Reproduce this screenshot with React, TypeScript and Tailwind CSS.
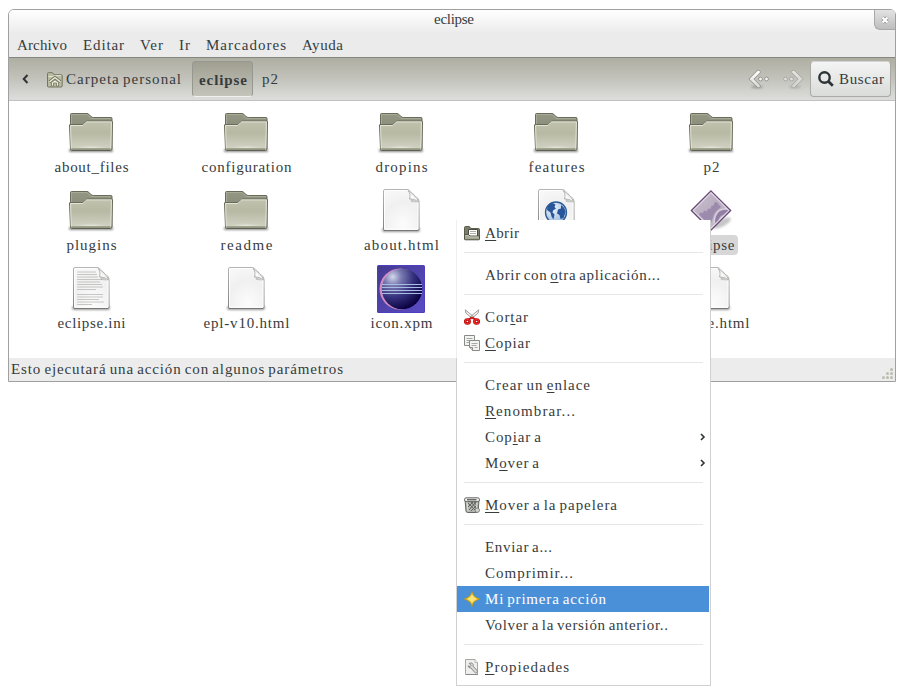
import React from "react";

const SERIF = '"Liberation Serif", "Times New Roman", serif';
const WORD_GAP = -1.5;
let context: CanvasRenderingContext2D | null = null;

/** Letter spacing that makes a label exactly `width` pixels wide. */
function trackingFor(text: string, width: number, size: number, bold: boolean) {
  context = context ?? document.createElement("canvas").getContext("2d");
  if (!context) return 0;
  context.font = `${bold ? "bold " : ""}${size}px ${SERIF}`;
  const natural = context.measureText(text).width + (text.split(" ").length - 1) * WORD_GAP;
  return (width - natural) / Math.max(1, text.length - 1);
}

type LabelProps = { text: string; width: number; size?: number; bold?: boolean; mnemonic?: number; className?: string };

function Label({ text, width, size = 15, bold = false, mnemonic = -1, className = "" }: LabelProps) {
  return (
    <span
      className={`block whitespace-nowrap leading-5 ${bold ? "font-bold" : ""} ${className}`}
      style={{ width, fontSize: size, letterSpacing: trackingFor(text, width, size, bold), wordSpacing: WORD_GAP }}
    >
      {mnemonic < 0 ? (
        text
      ) : (
        <>
          {text.slice(0, mnemonic)}
          <span className="underline decoration-1 underline-offset-2">{text[mnemonic]}</span>
          {text.slice(mnemonic + 1)}
        </>
      )}
    </span>
  );
}

function Gradients() {
  return (
    <svg className="absolute size-0" aria-hidden="true">
      <defs>
        <linearGradient id="folderBack" x1="0" y1="0" x2="0" y2="1">
          <stop offset="0" stopColor="#949783" />
          <stop offset="1" stopColor="#7b7e6c" />
        </linearGradient>
        <linearGradient id="folderFront" x1="0" y1="0" x2="0" y2="1">
          <stop offset="0" stopColor="#c2c3ae" />
          <stop offset=".4" stopColor="#b8b9a3" />
          <stop offset="1" stopColor="#d3d4c5" />
        </linearGradient>
        <radialGradient id="folderGlow" cx=".5" cy="1" r=".5">
          <stop offset="0" stopColor="#f4f4ee" />
          <stop offset="1" stopColor="#d3d4c5" stopOpacity="0" />
        </radialGradient>
        <radialGradient id="paper" cx=".55" cy=".85" r=".9">
          <stop offset="0" stopColor="#fcfcfc" />
          <stop offset=".6" stopColor="#eff0ef" />
          <stop offset="1" stopColor="#f8f8f8" />
        </radialGradient>
        <linearGradient id="paperEdge" x1="0" y1="0" x2="0" y2="1">
          <stop offset="0" stopColor="#b4b5b2" />
          <stop offset="1" stopColor="#80827e" />
        </linearGradient>
        <linearGradient id="curl" x1="0" y1="1" x2=".7" y2=".2">
          <stop offset="0" stopColor="#a9aba7" />
          <stop offset=".5" stopColor="#ffffff" />
          <stop offset="1" stopColor="#d4d5d3" />
        </linearGradient>
        <radialGradient id="ball" cx=".27" cy=".2" r=".85">
          <stop offset="0" stopColor="#d4d8ec" />
          <stop offset=".25" stopColor="#7a7cb2" />
          <stop offset=".6" stopColor="#35317d" />
          <stop offset="1" stopColor="#080040" />
        </radialGradient>
        <linearGradient id="xpmBack" x1="0" y1="0" x2="1" y2="1">
          <stop offset="0" stopColor="#443b91" />
          <stop offset="1" stopColor="#5a4bc4" />
        </linearGradient>
        <linearGradient id="diamond" x1="0" y1="0" x2="1" y2="1">
          <stop offset="0" stopColor="#cac3cf" />
          <stop offset=".5" stopColor="#b9adc0" />
          <stop offset="1" stopColor="#d3cbd7" />
        </linearGradient>
        <radialGradient id="globe" cx=".35" cy=".3" r=".75">
          <stop offset="0" stopColor="#eef4fa" />
          <stop offset="1" stopColor="#9bbbdf" />
        </radialGradient>
        <linearGradient id="star" x1="0" y1="0" x2="0" y2="1">
          <stop offset="0" stopColor="#f9de58" />
          <stop offset="1" stopColor="#f2c31e" />
        </linearGradient>
        <linearGradient id="arrow" x1="0" y1="0" x2="0" y2="1">
          <stop offset="0" stopColor="#ffffff" />
          <stop offset="1" stopColor="#d8dad5" />
        </linearGradient>
        <filter id="soft" x="-30%" y="-100%" width="160%" height="300%">
          <feGaussianBlur stdDeviation="1.1" />
        </filter>
      </defs>
    </svg>
  );
}

function Folder() {
  return (
    <svg width="48" height="48" viewBox="0 0 48 48">
      <rect x="2" y="40" width="44" height="3" rx="1" fill="#000" opacity=".45" filter="url(#soft)" />
      <path d="M3.5 40V5.5q0-1 1-1H20q1 0 1.8.8l2.2 2.2q1 1 2.2 1H44q1 0 1 1V40Z" fill="url(#folderBack)" stroke="#686b5a" />
      <path d="M4.5 16V5.5H20l4 4H44" fill="none" stroke="#a7aa96" />
      <path d="M2.8 15.5h12.5q1 0 1.8-.8l1.6-1.7q.8-1 2-1H44.6q.9 0 .9 1L44.8 40q0 1.5-1.2 1.5H4.8q-1.2 0-1.3-1.5L2.5 16Z" fill="url(#folderFront)" stroke="#686b5a" />
      <path d="M4.2 39.5 3.6 16.5h12.2l3.2-3.2q.4-.4 1-.4H44.4l-.6 26.6" fill="none" stroke="#e7e8dd" strokeWidth=".9" />
      <rect x="4.5" y="32" width="39" height="7.5" fill="url(#folderGlow)" />
      <path d="M4.5 39.5h39" stroke="#a2a58e" strokeWidth="1" />
      <path d="M4.5 41h39" stroke="#56594a" />
    </svg>
  );
}

function Page({ lines = false, globe = false }: { lines?: boolean; globe?: boolean }) {
  return (
    <svg width="48" height="48" viewBox="0 0 48 48">
      <rect x="5" y="41" width="38" height="4" rx="2" fill="#000" opacity=".4" filter="url(#soft)" />
      <path d="M6.5 4Q6.5 2.5 8 2.5H30q2 0 3.5 1.5l7 7q1.5 1.5 1.5 4V42q0 1.5-1.5 1.5H8q-1.5 0-1.5-1.5Z" fill="url(#paper)" stroke="url(#paperEdge)" />
      <path d="M7.5 42V4.5Q7.5 3.5 8.5 3.5H30q9 1 11 11V42Z" fill="none" stroke="#fff" strokeWidth=".9" />
      <path d="M7 43.5h34" stroke="#777974" />
      {lines &&
        [7, 9.5, 12, 14.5, 17, 19.5, 22, 24.5, 29.5, 32, 34.5, 37, 39.5].map((y, i) => (
          <path key={y} d={`M10 ${y}h${[19, 20, 21, 25, 23, 25, 26, 19, 26, 26, 22, 27, 15][i]}`} stroke="#bfc0be" strokeWidth=".9" />
        ))}
      {globe && (
        <>
          <circle cx="24" cy="25.5" r="10.5" fill="url(#globe)" stroke="#2c5a96" strokeWidth="1.3" />
          <path d="M15.5 19q2.5-2.5 5-3l3 1.500-1 2.500 1.500 1.500-3 2-.5 2 2 2-1 5-2-3-1-4-3.500-2.500ZM29 18q4 2.500 4.500 7l-2 6-3 1-1-4-2.500-1.500 1-4 3-1Z" fill="#28569a" />
        </>
      )}
      <path d="M31 3.5q3 3 1.5 8.5 5-.5 9 3-.5-3-4-6.5T31 3.5Z" fill="url(#curl)" stroke="#a6a8a4" strokeWidth=".8" />
      <path d="M33.5 12.5q4 0 7.5 3l-7-.5Z" fill="#999b97" opacity=".5" />
    </svg>
  );
}

function EclipseBall() {
  return (
    <svg width="48" height="48" viewBox="0 0 48 48">
      <rect width="48" height="48" rx="1.5" fill="#4e3fbd" />
      <rect x="1" y="1" width="46" height="46" fill="url(#xpmBack)" />
      <circle cx="23" cy="24" r="20.5" fill="#d28bc0" />
      <circle cx="25" cy="24" r="20.2" fill="url(#ball)" />
      <path d="M5 19.5h40M5 22.5h40M5 25.5h40M5 28.5h40" stroke="#a9bce2" />
    </svg>
  );
}

function Diamond() {
  return (
    <svg width="48" height="48" viewBox="0 0 48 48">
      <ellipse cx="35" cy="36" rx="10" ry="3.5" fill="#000" opacity=".22" filter="url(#soft)" transform="rotate(-28 35 36)" />
      <path d="M24 4 43.5 23.5 24 43 4.5 23.5Z" fill="url(#diamond)" />
      <path d="m13.5 29-1.5-1.5 1.5-2 2.500.5 1-2.500 3 1 1-3 2.500.5 1-3 2-.5 1-3 2-.5 2.500 3 2 2-3 2.500q-4 3-5 8l-3 8Z" fill="#927fa6" opacity=".75" />
      <path d="M42.5 23.5q-9-3-13 4-2.500 4-1 9l3-3q1-5 5-5.500Z" fill="#8975a0" opacity=".85" />
      <path d="M40 22q-12-1-13 14" fill="none" stroke="#dcd4e1" strokeWidth="1.6" opacity=".8" />
      <path d="M24 5.5 42 23.5 24 41.5 6 23.5Z" fill="none" stroke="#eee9f1" strokeWidth="1.2" opacity=".75" />
      <path d="M24 3.8 43.7 23.5 24 43.2 4.3 23.5Z" fill="none" stroke="#654474" strokeWidth="1.2" />
    </svg>
  );
}

function HomeFolder() {
  return (
    <svg width="16" height="16" viewBox="0 0 16 16">
      <path d="M.5 14V1.5q0-.8.8-.8h4.200l1.500 2h7.200q1 0 1 1V14q0 1-1 1H1.500q-1 0-1-1Z" fill="#b9ba9f" stroke="#747660" />
      <path d="M1.5 4.5h4.800l.8-.9h7" fill="none" stroke="#e4e4d3" />
      <path d="m2.5 10 5.500-4.500L13.500 10" fill="none" stroke="#747660" strokeWidth="3" />
      <path d="m2.5 10 5.500-4.500L13.500 10" fill="none" stroke="#f0f0e2" strokeWidth="1.3" />
      <path d="M4.5 14v-3.500L8 7.800l3.500 2.700V14H9.500v-3h-3v3Z" fill="#f0f0e2" stroke="#747660" strokeWidth=".8" />
    </svg>
  );
}

function MenuIcon({ name }: { name: string }) {
  return (
    <svg width="16" height="16" viewBox="0 0 16 16">
      {name === "open" && (
        <>
          <path d="M.5 14V2.5q0-1 1-1h3.800l1.700 2h7.500q1 0 1 1V14Z" fill="#7a7d6c" stroke="#5b5e4f" />
          <path d="M4.500 4.500h9v7h-9z" fill="#fff" stroke="#484b3d" />
          <path d="M6 6.500h6M6 8.500h6" stroke="#b0b1ad" />
          <path d="M.5 9.500h4l1.500 1.500h9.500V14q0 .8-1 .8h-13q-1 0-1-.8Z" fill="#a3a692" stroke="#525546" />
          <path d="M1.500 10.500H4l1.500 1.500h9" fill="none" stroke="#c4c6b5" />
        </>
      )}
      {name === "cut" && (
        <>
          <path d="M1.300.8 1.800 4l6.700 6 1.500-2ZM14.700.8 14.200 4l-6.700 6L6 8Z" fill="#eeeeec" stroke="#888a85" strokeWidth=".8" />
          <path d="M4.500 10.500 8 8.500l3.500 2" fill="none" stroke="#cc1111" strokeWidth="1.6" />
          <ellipse cx="3.400" cy="12.500" rx="2.200" ry="2" fill="none" stroke="#b00000" strokeWidth="2.6" />
          <ellipse cx="12.600" cy="12.500" rx="2.200" ry="2" fill="none" stroke="#b00000" strokeWidth="2.6" />
          <ellipse cx="3.400" cy="12.500" rx="2.300" ry="2.100" fill="none" stroke="#ef2929" strokeWidth="1.2" />
          <ellipse cx="12.600" cy="12.500" rx="2.300" ry="2.100" fill="none" stroke="#ef2929" strokeWidth="1.2" />
        </>
      )}
      {name === "copy" && (
        <>
          <path d="M.5.5h10v10H.5z" fill="#f2f3f2" stroke="#888a85" />
          <path d="M2.500 3.500h6M2.500 5.500h5M2.500 7.500h3" stroke="#a6a8a4" />
          <path d="M5.500 5.500h10v10h-7l-3-3Z" fill="#f2f3f2" stroke="#888a85" />
          <path d="M5.500 12.500h3v3" fill="#d3d5d0" stroke="#888a85" />
          <path d="M7.500 8.500h6M7.500 10.500h5M10.500 12.500h3" stroke="#a6a8a4" />
        </>
      )}
      {name === "trash" && (
        <>
          <path d="M1 2.500 2 14q.2 1.500 1.700 1.500h9q1.300 0 1.500-1.500L15 2.500Z" fill="#b4b6b2" stroke="#656764" />
          <path d="m4 6 7 7M7 5l5 6M10 5l3 4M12 5l-7 8M9 5l-5 5M13 8l-6 6" stroke="#5a5c58" strokeWidth=".9" />
          <path d="M3 5.500 4 14M13 6l-1 8" stroke="#dedfdd" />
          <rect x=".5" y=".8" width="15" height="3.8" rx="1.7" fill="#eeefed" stroke="#656764" />
          <path d="M3 2.700h9.500" stroke="#6a6c69" strokeWidth="1.5" />
          <circle cx="13.300" cy="13.200" r="2.200" fill="#d4d6d1" stroke="#777974" strokeWidth=".9" />
        </>
      )}
      {name === "star" && (
        <>
          <path d="M8 .5q1 4.300 2.600 4.900Q12 6.800 15.600 8q-3.600 1.200-5 2.600Q9 11.200 8 15.500 7 11.200 5.400 10.600 4 9.200.4 8q3.600-1.200 5-2.600Q7 4.800 8 .5Z" fill="url(#star)" stroke="#bf960f" strokeWidth=".9" />
          <path d="M8 3.500 9.600 6.600 12.600 8 9.600 9.400 8 12.500 6.400 9.400 3.400 8l3-1.400Z" fill="#fff3a8" opacity=".6" />
        </>
      )}
      {name === "properties" && (
        <>
          <path d="M1.500.5H11L13.500 3.500v12h-12z" fill="#edeeed" stroke="#a5a7a3" />
          <path d="M11 .5v3h2.500" fill="#fff" stroke="#aaaca7" strokeWidth=".8" />
          <path d="M5.200 4.300q3-1.300 4 1.200l-.1 1.700 4 4.300q.8 1.500-.5 2.300-1 .4-2-.5L7 9q-2.500.2-3-2.200l2 .9 1-1.400Z" fill="#d8dad7" stroke="#80827e" strokeWidth=".9" />
          <path d="M2 15.500h12" stroke="#858782" />
        </>
      )}
    </svg>
  );
}

type FileItem = { text: string; width: number; icon: React.ReactNode; selected?: boolean };

const files: (FileItem | null)[] = [
  { text: "about_files", width: 74, icon: <Folder /> },
  { text: "configuration", width: 90, icon: <Folder /> },
  { text: "dropins", width: 52, icon: <Folder /> },
  { text: "features", width: 56, icon: <Folder /> },
  { text: "p2", width: 16, icon: <Folder /> },
  { text: "plugins", width: 50, icon: <Folder /> },
  { text: "readme", width: 52, icon: <Folder /> },
  { text: "about.html", width: 75, icon: <Page /> },
  { text: "", width: 0, icon: <Page globe /> },
  { text: "eclipse", width: 46, icon: <Diamond />, selected: true },
  { text: "eclipse.ini", width: 68, icon: <Page lines /> },
  { text: "epl-v10.html", width: 86, icon: <Page /> },
  { text: "icon.xpm", width: 62, icon: <EclipseBall /> },
  null,
  { text: "notice.html", width: 76, icon: <Page /> },
];

type Entry = { text: string; width: number; icon?: string; mnemonic?: number; submenu?: boolean; active?: boolean };

const groups: Entry[][] = [
  [{ text: "Abrir", width: 34, icon: "open", mnemonic: 0 }],
  [{ text: "Abrir con otra aplicación...", width: 175, mnemonic: 10 }],
  [
    { text: "Cortar", width: 43, icon: "cut", mnemonic: 3 },
    { text: "Copiar", width: 45, icon: "copy", mnemonic: 0 },
  ],
  [
    { text: "Crear un enlace", width: 105, mnemonic: 9 },
    { text: "Renombrar...", width: 90, mnemonic: 0 },
    { text: "Copiar a", width: 56, mnemonic: 3, submenu: true },
    { text: "Mover a", width: 54, mnemonic: 1, submenu: true },
  ],
  [{ text: "Mover a la papelera", width: 132, icon: "trash", mnemonic: 0 }],
  [
    { text: "Enviar a...", width: 67 },
    { text: "Comprimir...", width: 88 },
    { text: "Mi primera acción", width: 121, icon: "star", active: true },
    { text: "Volver a la versión anterior..", width: 183 },
  ],
  [{ text: "Propiedades", width: 84, icon: "properties", mnemonic: 0 }],
];

function TitleBar() {
  return (
    <div className="flex h-6 items-start">
      <div className="w-[21px]" />
      <div className="flex flex-1 justify-center pl-1">
        <Label text="eclipse" width={40} className="-mt-px" />
      </div>
      <div className="flex h-5 w-[21px] items-center justify-center rounded-bl-md rounded-tr-[4px] border-b border-l border-[#a9a9a9] bg-linear-to-b from-[#e3e3e3] to-[#bebebe]">
        <svg width="8" height="8" viewBox="0 0 8 8">
          <path d="m1.5 1.5 5 5m0-5-5 5" stroke="#8f8f8f" strokeWidth="3.4" />
          <path d="m1.5 1.5 5 5m0-5-5 5" stroke="#fff" strokeWidth="2.2" />
        </svg>
      </div>
    </div>
  );
}

function MenuBar() {
  return (
    <div className="flex h-[23px] gap-4 pl-2 pt-px">
      <Label text="Archivo" width={50} />
      <Label text="Editar" width={41} />
      <Label text="Ver" width={23} />
      <Label text="Ir" width={11} />
      <Label text="Marcadores" width={80} />
      <Label text="Ayuda" width={41} />
    </div>
  );
}

function NavArrow({ forward = false }: { forward?: boolean }) {
  return (
    <svg width="22" height="22" viewBox="0 0 22 22" className={forward ? "-scale-x-100 opacity-60" : ""}>
      <ellipse cx="9" cy="19" rx="6" ry="1.5" fill="#666" opacity=".5" filter="url(#soft)" />
      <path d="M10.500 4 3.500 11l7 7" fill="none" stroke="#8d8f89" strokeWidth="4.2" strokeLinecap="round" />
      <path d="M10.500 4 3.500 11l7 7" fill="none" stroke="url(#arrow)" strokeWidth="2.9" strokeLinecap="round" />
      <circle cx="12.500" cy="11" r="1.900" fill="#f5f5f4" stroke="#8d8f89" strokeWidth=".9" />
      <circle cx="18.500" cy="11" r="1.900" fill="#f5f5f4" stroke="#8d8f89" strokeWidth=".9" />
    </svg>
  );
}

function Toolbar() {
  return (
    <div className="flex h-11 items-center border-b border-t border-b-[#c1c2bf] border-t-[#848880] bg-linear-to-b from-[#aeaea2] via-[#c3c3bc] to-[#dddedc] pr-1">
      <svg width="8" height="10" viewBox="0 0 8 10" className="ml-3">
        <path d="M6.500 1 2.700 5l3.800 4" fill="none" stroke="#2e3436" strokeWidth="2" />
      </svg>
      <div className="ml-[18px] mt-0.5">
        <HomeFolder />
      </div>
      <Label text="Carpeta personal" width={115} className="ml-[3px]" />
      <div className="ml-[11px] flex h-9 w-[61px] items-center justify-center rounded-[4px] border border-[#96988f] border-b-[#f1f1ef] bg-linear-to-b from-[#a09f91] to-[#c4c4bb] pl-px pt-0.5">
        <Label text="eclipse" width={48} bold />
      </div>
      <Label text="p2" width={16} className="ml-[9px]" />
      <div className="ml-auto flex items-center gap-3">
        <NavArrow />
        <NavArrow forward />
      </div>
      <div className="ml-1.5 flex h-9 w-[81px] items-center rounded-[4px] border border-[#a9aba7] border-t-[#d4d5d2] bg-linear-to-b from-[#f3f4f3] to-[#dadcda] pl-1.5">
        <svg width="18" height="18" viewBox="0 0 18 18">
          <circle cx="7.500" cy="7.500" r="5.200" fill="none" stroke="#2e3436" strokeWidth="2.4" />
          <path d="m11.500 11.500 4.300 4.300" stroke="#2e3436" strokeWidth="2.8" />
        </svg>
        <Label text="Buscar" width={45} className="ml-1" />
      </div>
    </div>
  );
}

function ContextMenu() {
  return (
    <div className="absolute left-[456px] top-[220px] flex h-[466px] w-[255px] flex-col border-x border-b border-[#d0d0d0] bg-white">
      <div className="absolute -left-px top-0 h-[138px] w-px bg-[#efefef]" />
      {groups.map((group, index) => (
        <React.Fragment key={group[0].text}>
          {index > 0 && <div className="mx-[7px] mb-[9px] mt-1.5 h-px shrink-0 bg-[#e6e6e6]" />}
          {group.map((entry) => (
            <div
              key={entry.text}
              className={`flex h-[26px] shrink-0 items-center pl-[7px] ${entry.active ? "mr-px bg-[#4a90d9] text-white" : ""}`}
            >
              <div className="size-4 shrink-0">{entry.icon && <MenuIcon name={entry.icon} />}</div>
              <Label text={entry.text} width={entry.width} mnemonic={entry.mnemonic} className="ml-[5px]" />
              {entry.submenu && (
                <svg width="6" height="8" viewBox="0 0 6 8" className="ml-auto mr-1">
                  <path d="M1 1 4 4 1 7" fill="none" stroke="#2e3436" strokeWidth="1.6" />
                </svg>
              )}
            </div>
          ))}
        </React.Fragment>
      ))}
    </div>
  );
}

export default function App() {
  return (
    <div className="relative h-[688px] w-[906px] overflow-hidden bg-white px-2 pt-[9px] font-['Liberation_Serif','Times_New_Roman',serif] text-[#363c3e]">
      <Gradients />
      <div className="flex h-[373px] w-[888px] flex-col rounded-t-md border border-[#a0a0a0] bg-white">
        <div className="rounded-t-[5px] bg-linear-to-b from-white to-[#ebebeb] to-50%">
          <TitleBar />
          <MenuBar />
        </div>
        <Toolbar />
        <div className="grid h-[257px] grid-cols-[repeat(5,155px)] grid-rows-[repeat(3,78px)] pl-[5px] pt-2">
          {files.map((file, index) =>
            file ? (
              <div key={index} className="flex flex-col items-center">
                <div className="-ml-px size-12">{file.icon}</div>
                <div className={file.selected ? "rounded-[4px] bg-[#d7d7d7] px-[3px]" : ""}>
                  {file.text && <Label text={file.text} width={file.width} />}
                </div>
              </div>
            ) : (
              <div key={index} />
            ),
          )}
        </div>
        <div className="flex h-[23px] items-start justify-between bg-[#ececec] px-0.5">
          <Label text="Esto ejecutará una acción con algunos parámetros" width={332} className="mt-px" />
          <svg width="11" height="11" viewBox="0 0 11 11" className="mt-2.5">
            {[[9.5, 1.5], [5.5, 5.5], [9.5, 5.5], [1.5, 9.5], [5.5, 9.5], [9.5, 9.5]].map(([x, y]) => (
              <circle key={`${x}-${y}`} cx={x} cy={y} r="1.5" fill="#babdb0" />
            ))}
          </svg>
        </div>
      </div>
      <ContextMenu />
    </div>
  );
}
